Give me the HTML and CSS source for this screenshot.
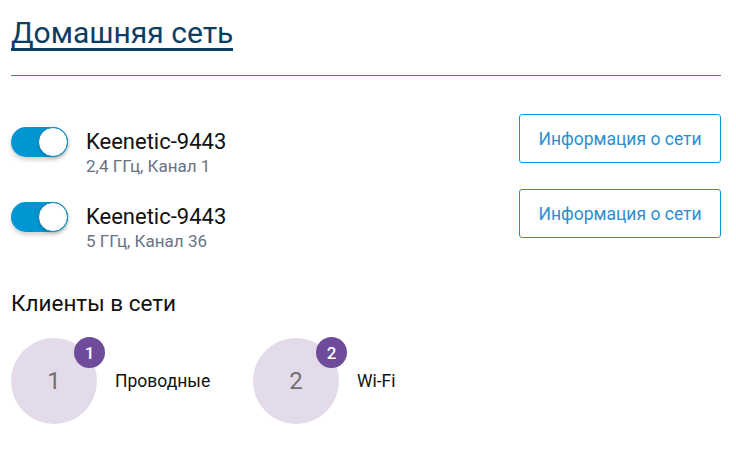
FILE: index.html
```html
<!DOCTYPE html>
<html lang="ru">
<head>
<meta charset="UTF-8">
<meta name="viewport" content="width=device-width, initial-scale=1.0">
<title>Домашняя сеть</title>
<link rel="stylesheet" href="styles.css">
</head>
<body>
    <div class="page">
        <h1 class="title"><span>Домашняя сеть</span></h1>
        <div class="divider"></div>

        <!-- Wi-Fi networks -->
        <div class="networks">
            <div class="network">
                <div class="network-left">
                    <label class="switch">
                        <input type="checkbox" checked>
                        <span class="slider"></span>
                    </label>
                    <div class="network-text">
                        <div class="network-name">Keenetic-9443</div>
                        <div class="network-info">2,4 ГГц, Канал 1</div>
                    </div>
                </div>
                <button class="info-button">Информация о сети</button>
            </div>

            <div class="network">
                <div class="network-left">
                    <label class="switch">
                        <input type="checkbox" checked>
                        <span class="slider"></span>
                    </label>
                    <div class="network-text">
                        <div class="network-name">Keenetic-9443</div>
                        <div class="network-info">5 ГГц, Канал 36</div>
                    </div>
                </div>
                <button class="info-button">Информация о сети</button>
            </div>
        </div>

        <!-- Clients -->
        <h2 class="clients-title">Клиенты в сети</h2>
        <div class="clients">
            <div class="client">
                <div class="client-circle">
                    1
                    <span class="badge">1</span>
                </div>
                <div class="client-label">Проводные</div>
            </div>
            <div class="client">
                <div class="client-circle">
                    2
                    <span class="badge">2</span>
                </div>
                <div class="client-label">Wi-Fi</div>
            </div>
        </div>
    </div>
</body>
</html>
```

FILE: styles.css
```css
body {
    font-family: Roboto, "Noto Sans", sans-serif;
    background: white;
    margin: 0;
    padding: 0;
    color: #111;
}

.page {
    padding: 18px 15px 0 11px;
}

.title {
    margin: 0;
    font-size: 30px;
    font-weight: 400;
    line-height: 30px;
    color: #0d3d5f;
}

.title span {
    display: inline-block;
    border-bottom: 3px solid #0d3d5f;
}

.divider {
    height: 1px;
    background: #3f86a6;
    margin-top: 24px;
}

.networks {
    margin-top: 38px;
    display: flex;
    flex-direction: column;
    gap: 13px;
}

.network {
    display: flex;
    justify-content: space-between;
    align-items: flex-start;
}

.network-left {
    display: flex;
    align-items: flex-start;
    gap: 18px;
}

/* Toggle switch */
.switch {
    position: relative;
    display: inline-block;
    width: 57px;
    height: 30px;
    margin-top: 13px;
}

.switch input {
    display: none;
}

.slider {
    position: absolute;
    top: 0;
    left: 0;
    right: 0;
    bottom: 0;
    background: #0096d1;
    border-radius: 15px;
    box-shadow: 0 3px 4px rgba(0, 0, 0, 0.18);
}

.slider::after {
    content: "";
    position: absolute;
    top: 0;
    right: 0;
    width: 28px;
    height: 28px;
    border: 1px solid #0a86ba;
    border-radius: 50%;
    background: white;
    box-shadow: 0 1px 3px rgba(0, 0, 0, 0.2);
}

.network-text {
    margin-top: 15px;
}

.network-name {
    font-size: 22px;
    line-height: 26px;
    color: #111;
}

.network-info {
    font-size: 17px;
    line-height: 20px;
    margin-top: 1px;
    color: #687383;
}

.info-button {
    font-family: inherit;
    height: 49px;
    width: 202px;
    background: white;
    border: 1px solid #0a9ad6;
    border-radius: 3px;
    color: #2c8ed0;
    font-size: 17.5px;
    cursor: pointer;
}

/* Clients */
.clients-title {
    margin: 39px 0 0 0;
    font-size: 22.5px;
    font-weight: 400;
    line-height: 27px;
    color: #111;
}

.clients {
    display: flex;
    gap: 42px;
    margin-top: 21px;
}

.client {
    display: flex;
    align-items: center;
    gap: 18px;
    width: 200px;
}

.client-circle {
    position: relative;
    width: 86px;
    height: 86px;
    border-radius: 50%;
    background: #e3dbe9;
    color: #707070;
    font-size: 24px;
    display: flex;
    align-items: center;
    justify-content: center;
}

.badge {
    position: absolute;
    top: -1px;
    right: -8px;
    width: 31px;
    height: 31px;
    border-radius: 50%;
    background: #6e4b9b;
    color: white;
    font-size: 17px;
    font-weight: 500;
    display: flex;
    align-items: center;
    justify-content: center;
}

.client-label {
    font-size: 17.5px;
    color: #111;
}
```
